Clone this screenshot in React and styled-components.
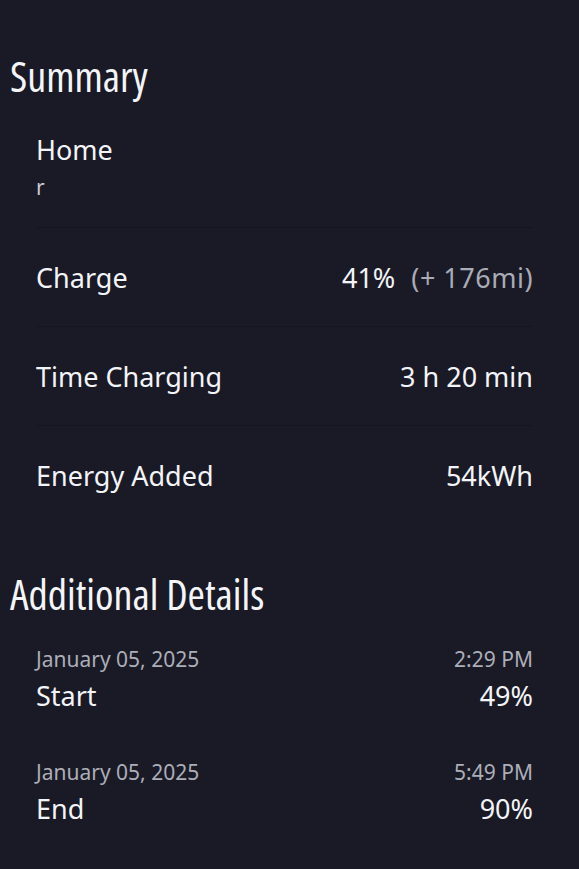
import React from 'react';
import styled, { createGlobalStyle } from 'styled-components';

const GlobalStyle = createGlobalStyle`
  html, body {
    margin: 0;
    padding: 0;
    background: #191a25;
  }
  body {
    font-family: "Noto Sans", "DejaVu Sans", sans-serif;
    color: #f3f4f8;
  }
`;

const Page = styled.div`
  min-height: 869px;
  background: #191a25;
  padding-top: 56px;
  box-sizing: border-box;
`;

const SectionTitle = styled.h2`
  margin: ${props => (props.$first ? '0' : '50px')} 0 0 10px;
  font-family: "Open Sans", "DejaVu Sans Condensed", sans-serif;
  font-stretch: 80%;
  font-weight: 400;
  font-size: 42px;
  line-height: 40px;
  color: #f4f5f9;
`;

const List = styled.div`
  margin: 0 46px 0 36px;
  display: flex;
  flex-direction: column;
`;

const Location = styled.div`
  padding: 38px 0 27px;
  display: flex;
  flex-direction: column;
`;

const LocationName = styled.div`
  font-size: 27px;
  line-height: 32px;
`;

const LocationAddress = styled.div`
  margin-top: 8px;
  height: 26px;
  font-size: 21px;
  line-height: 26px;
  color: #c9cbd3;
`;

const Row = styled.div`
  height: 98px;
  display: flex;
  align-items: center;
  justify-content: space-between;
  border-top: 1px solid #14151d;
  font-size: 27px;
`;

const Value = styled.span`
  color: #f3f4f8;
`;

const Muted = styled.span`
  color: #a9abb6;
  margin-left: 16px;
  letter-spacing: 0.5px;
`;

const Events = styled.div`
  margin: 33px 46px 0 36px;
  display: flex;
  flex-direction: column;
  gap: 48px;
`;

const Event = styled.div`
  display: flex;
  flex-direction: column;
  gap: 9px;
`;

const EventLine = styled.div`
  display: flex;
  justify-content: space-between;
  align-items: center;
  font-size: ${props => (props.$small ? '21px' : '27px')};
  line-height: ${props => (props.$small ? '24px' : '32px')};
  color: ${props => (props.$small ? '#acaeb8' : '#f3f4f8')};
`;

const summaryRows = [
  { label: 'Charge', value: '41%', extra: '(+ 176mi)' },
  { label: 'Time Charging', value: '3 h 20 min' },
  { label: 'Energy Added', value: '54kWh' },
];

const events = [
  { date: 'January 05, 2025', time: '2:29 PM', label: 'Start', level: '49%' },
  { date: 'January 05, 2025', time: '5:49 PM', label: 'End', level: '90%' },
];

export default function App() {
  return (
    <>
      <GlobalStyle />
      <Page>
        <SectionTitle $first>Summary</SectionTitle>
        <List>
          <Location>
            <LocationName>Home</LocationName>
            <LocationAddress>r</LocationAddress>
          </Location>
          {summaryRows.map(row => (
            <Row key={row.label}>
              <span>{row.label}</span>
              <Value>
                {row.value}
                {row.extra && <Muted>{row.extra}</Muted>}
              </Value>
            </Row>
          ))}
        </List>

        <SectionTitle>Additional Details</SectionTitle>
        <Events>
          {events.map(ev => (
            <Event key={ev.label}>
              <EventLine $small>
                <span>{ev.date}</span>
                <span>{ev.time}</span>
              </EventLine>
              <EventLine>
                <span>{ev.label}</span>
                <span>{ev.level}</span>
              </EventLine>
            </Event>
          ))}
        </Events>
      </Page>
    </>
  );
}
